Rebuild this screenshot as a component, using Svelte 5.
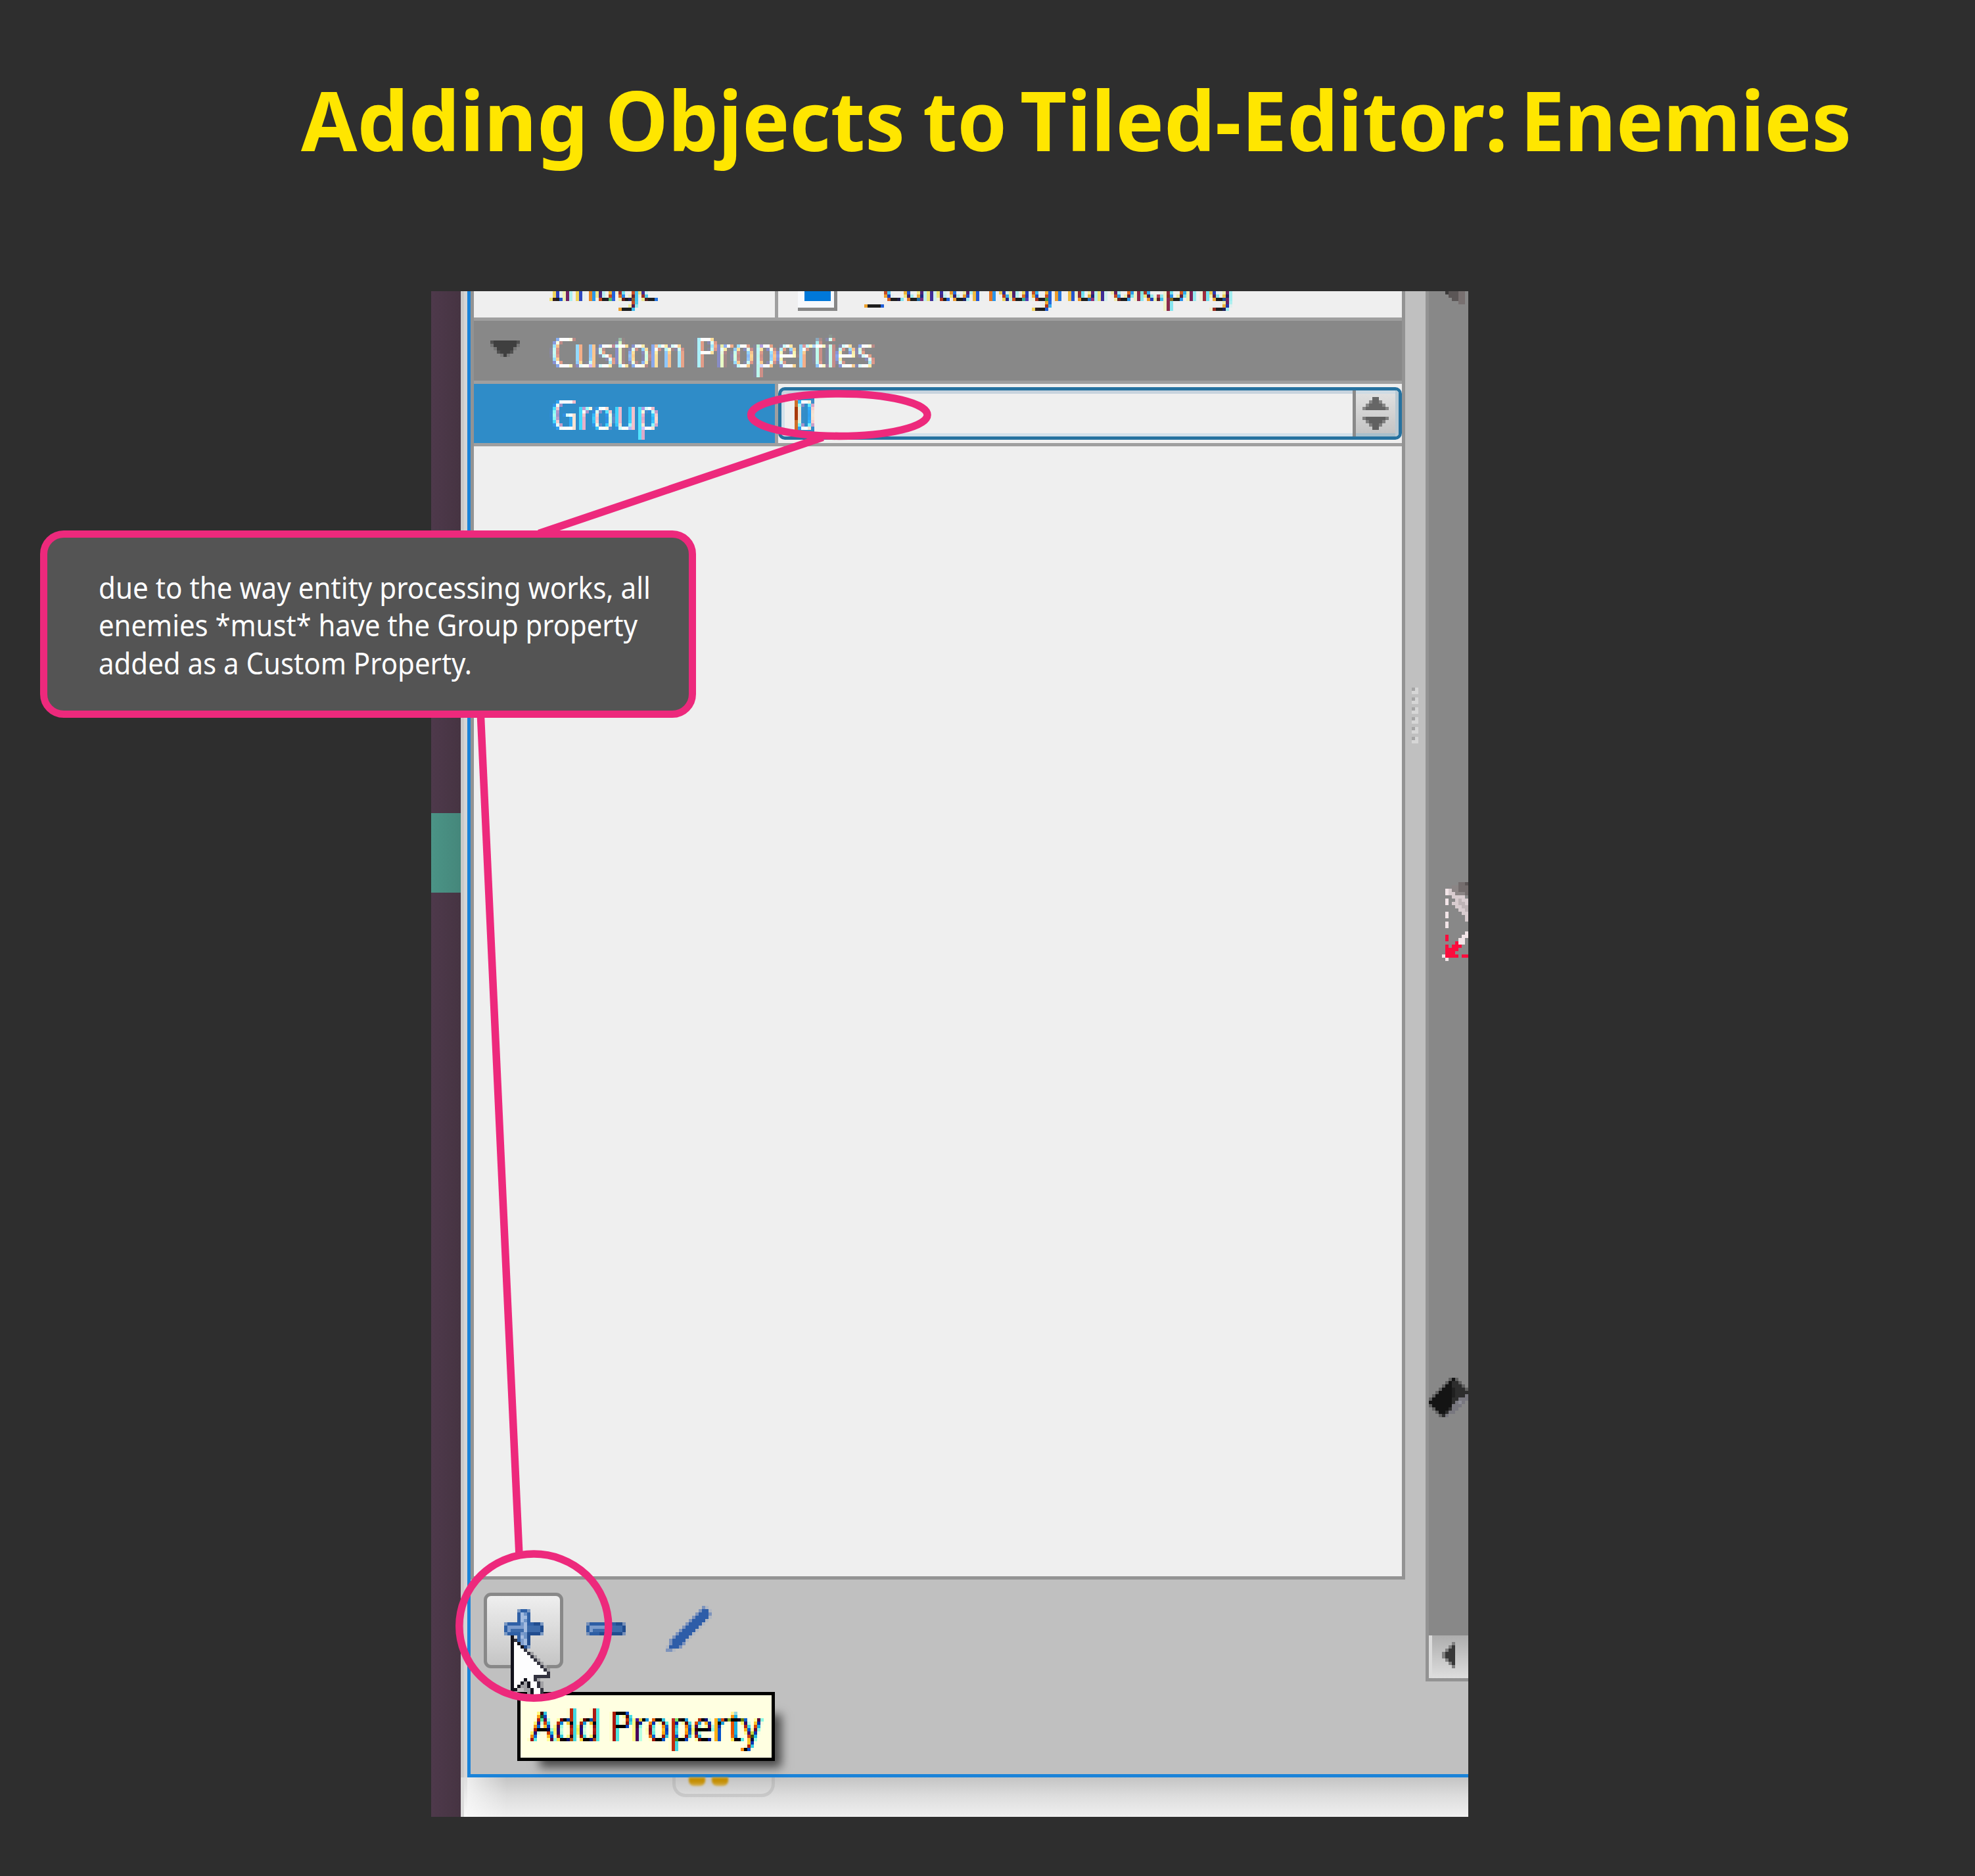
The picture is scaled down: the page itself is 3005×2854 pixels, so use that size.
<script>
  const plus = {
    rows: [
      '....lbbl....', '....bHMb....', '....bHHb....', '....bHMb....',
      'lbbbbMHbbddl', 'bhhhhhHmmmmd', 'bhmmmmHmmmmd', 'lbbbbhMddddl',
      '....bHMd....', '....bhHd....', '....bhHd....', '....lddl....'
    ],
    colors: { l: '#7a98c2', b: '#2f60a6', d: '#214d8f', h: '#7c9ccd', m: '#3d6bab', H: '#a3bbdf', M: '#6f94c8' }
  };
  const minus = {
    rows: ['lbbbbbbbbddl', 'bhhhhhmmmmmd', 'bhmmmmmmmmmd', 'lbbbdddddddl'],
    colors: { l: '#7790b8', b: '#2d5ea4', d: '#214d8f', h: '#7c9ccb', m: '#3d6bab' }
  };
  const pencil = {
    rows: [
      '...........lf.', '..........lbbf', '.........lbbbl', '........lbbbbf',
      '.......lbbbbf.', '......lbbbbf..', '.....lbbbbf...', '....lbbbbf....',
      '...lbbbbf.....', '..lbbbbf......', '.lbbbbf.......', '.lbbbl........',
      'fbbbl.........', 'llf...........'
    ],
    colors: { l: '#7d93bc', b: '#2e5da8', f: '#b1b7c2' }
  };
  const cursor = {
    rows: [
      'k...........', 'kD..........', 'kwk.........', 'kwwk........', 'kwwwD.......',
      'kwwwwDg.....', 'kwwwwwDg....', 'kwwwwwwDg...', 'kwwwwwwwDg..', 'kwwwwwwwwDg.',
      'kwwwwwwwwwDg', 'kwwwwwwwwwwD', 'kwwwwwwDDDDD', 'kwwwkwwDg...', 'kwwkgkwwDg..',
      'kwkggkwwDg..', 'kk..ggkwwD..', '.....gkwwD..'
    ],
    colors: { k: '#12121c', D: '#33333f', w: '#fdfdfe', g: '#a0a0a3' }
  };
  const expander = {
    rows: ['dkkkkkkkd', 'gkkkkkkkg', '.gkkkkkg.', '..dkkkd..', '...gkg...'],
    colors: { k: '#3f3f3f', d: '#505050', g: '#777' }
  };
  const up = { rows: ['...kk...', '..gkkg..', '.gkkkkg.', 'gkkkkkkg'], colors: { k: '#666', g: '#888' } };
  const down = { rows: ['gkkkkkkg', '.gkkkkg.', '..gkkg..', '...kk...'], colors: { k: '#606060', g: '#808080' } };
  const left = {
    rows: ['...g', '..gk', '.gkk', 'gkkk', 'gkkk', '.gkk', '..gk', '...g'],
    colors: { k: '#383838', g: '#808080' }
  };
  const corner = {
    rows: ['Kdddss', '.dddss', '..ddss', '....ss'],
    colors: { K: '#3c3a3a', d: '#5b5656', s: '#787070' }
  };
  const sprite = {
    rows: [
      '.........ddD', '.......mmddd', '.....wpmmddd', '.....wppmmmd', '.......pppp.',
      '.....w..pspp', '.....w.ppssp', '........ppss', '.........pps', '.....w....pp',
      '.....w.....p', '...........p', '.....w......', '.....w......', '............',
      '...........w', '.....r....ww', '.....r...ww.', '........rww.', '.....r.rrr..',
      '.....rrrr...', '.....rrr....', '....wrrrr.rr', '.....w......'
    ],
    colors: { D: '#5b5555', d: '#746d6d', m: '#8b8585', w: '#f2e5e8', p: '#d8cccf', s: '#beb4b6', r: '#fb0d3d' }
  };
  const eraser = {
    rows: [
      '......gkg...', '.....gkddg..', '....gkkdddg.', '...gkkkedddg', '..gkkkkedddd',
      '.gkkkkkedddv', 'gkkkkkkddvvv', 'kkkkkkkdvVv.', 'gkkkkkkvvv..', '.gkkkkdvv...',
      '..gkkdvv....', '...gdv......'
    ],
    colors: { k: '#141414', d: '#2d2d2d', e: '#202020', g: '#606060', v: '#78777f', V: '#8c8c96' }
  };

  const titleWords = [
    { text: 'Adding', x: 0, w: 437 },
    { text: 'Objects', x: 463, w: 456 },
    { text: 'to', x: 946, w: 128 },
    { text: 'Tiled-Editor:', x: 1094, w: 742 },
    { text: 'Enemies', x: 1855, w: 504 }
  ];
  const noteLines = [
    { text: 'due to the way entity processing works, all', y: 50, w: 840 },
    { text: 'enemies *must* have the Group property', y: 107, w: 820 },
    { text: 'added as a Custom Property.', y: 165, w: 568 }
  ];
</script>

{#snippet art(a)}
  <svg class="art" width={a.rows[0].length * 5} height={a.rows.length * 5}
    viewBox="0 0 {a.rows[0].length} {a.rows.length}" shape-rendering="crispEdges">
    {#each a.rows as row, y}
      {#each row.split('') as c, x}
        {#if a.colors[c]}<rect {x} {y} width="1" height="1" fill={a.colors[c]} />{/if}
      {/each}
    {/each}
  </svg>
{/snippet}

{#snippet label(text, width, height, base, length, x = 7)}
  <svg class="label" {width} {height}>
    <text {x} y={base} textLength={length} lengthAdjust="spacingAndGlyphs">{text}</text>
  </svg>
{/snippet}

<main>
  <!-- Enlarged subpixel text: shift the colour channels, then repeat one sample per 5px cell -->
  <svg class="defs" width="0" height="0">
    <filter id="cells" x="0" y="0" width="100%" height="100%" color-interpolation-filters="sRGB">
      <feGaussianBlur in="SourceGraphic" stdDeviation="1.1 0.7" result="soft" />
      <feOffset in="soft" dx="2" dy="0" result="or" />
      <feColorMatrix in="or" type="matrix" values="1 0 0 0 0  0 0 0 0 0  0 0 0 0 0  0 0 0 1 0" result="r" />
      <feColorMatrix in="soft" type="matrix" values="0 0 0 0 0  0 1 0 0 0  0 0 0 0 0  0 0 0 1 0" result="g" />
      <feOffset in="soft" dx="-2" dy="0" result="ob" />
      <feColorMatrix in="ob" type="matrix" values="0 0 0 0 0  0 0 0 0 0  0 0 1 0 0  0 0 0 1 0" result="b" />
      <feComposite in="r" in2="g" operator="arithmetic" k1="0" k2="1" k3="1" k4="0" result="rg" />
      <feComposite in="rg" in2="b" operator="arithmetic" k1="0" k2="1" k3="1" k4="0" result="rgb" />
      <feFlood x="2" y="2" width="1" height="1" flood-color="#000" />
      <feComposite x="0" y="0" width="5" height="5" />
      <feTile result="dots" />
      <feComposite in="rgb" in2="dots" operator="in" />
      <feMorphology operator="dilate" radius="2" />
    </filter>
  </svg>

  <h1>
    <svg width="2400" height="180">
      {#each titleWords as t}
        <text x={t.x} y="130" textLength={t.w} lengthAdjust="spacingAndGlyphs">{t.text}</text>
      {/each}
    </svg>
  </h1>

  <section class="shot">
    <div class="backdrop"><div class="teal"></div></div>
    <div class="gutter"></div>
    <div class="desk">
      <div class="window">
        <div class="dock">
          <div class="props">
            <div class="row image">
              <div class="key"><div class="pix light">{@render label('Image', 195, 40, 15, 165)}</div></div>
              <div class="value">
                <div class="file"><div class="blue"></div></div>
                <div class="pix light name">{@render label('_editorRagnarok.png', 600, 40, 15, 557, 8)}</div>
              </div>
            </div>
            <div class="row head">
              <div class="twisty">{@render art(expander)}</div>
              <div class="pix grey">{@render label('Custom Properties', 525, 90, 70, 492)}</div>
            </div>
            <div class="row group">
              <div class="key sel"><div class="pix bluebg">{@render label('Group', 195, 90, 70, 164)}</div></div>
              <div class="value">
                <div class="spin">
                  <div class="caret"></div>
                  <div class="pix bluebg digit">{@render label('0', 35, 55, 50, 30, 1)}</div>
                  <div class="steps">{@render art(up)}{@render art(down)}</div>
                </div>
              </div>
            </div>
          </div>
          <div class="tools">
            <div class="btn">{@render art(plus)}</div>
            <div class="minus">{@render art(minus)}</div>
            <div class="pencil">{@render art(pencil)}</div>
          </div>
        </div>
        <div class="splitter">
          {#each Array(6) as _}<i></i>{/each}
        </div>
        <div class="scene">
          <div class="s-corner">{@render art(corner)}</div>
          <div class="s-sprite">{@render art(sprite)}</div>
          <div class="s-eraser">{@render art(eraser)}</div>
          <div class="scroll">{@render art(left)}</div>
        </div>
      </div>
      <div class="below">
        <div class="card"><i></i><i></i></div>
      </div>
    </div>

    <div class="tip"><div class="pix cream">{@render label('Add Property', 382, 90, 65, 351, 15)}</div></div>
    <div class="pointer">{@render art(cursor)}</div>
  </section>

  <svg class="marks" width="3005" height="2854" fill="none" stroke="#ed297c" stroke-width="11.5">
    <line x1="820" y1="811.5" x2="1252" y2="665.3" />
    <line x1="731" y1="1080" x2="789.8" y2="2362" />
    <ellipse cx="1276.8" cy="631.2" rx="134.2" ry="32.2" />
    <ellipse cx="812.3" cy="2473.7" rx="113.5" ry="109.6" />
  </svg>

  <aside class="note">
    <svg width="900" height="190">
      {#each noteLines as l}
        <text x="0" y={l.y} textLength={l.w} lengthAdjust="spacingAndGlyphs">{l.text}</text>
      {/each}
    </svg>
  </aside>
</main>

<style>
  :global(body) { background: #2e2e2e; }
  main {
    position: relative; width: 3005px; height: 2854px; overflow: hidden;
    background: #2e2e2e; font-family: "Noto Sans", "Open Sans", sans-serif;
  }
  main :is(div, aside, h1, i) { box-sizing: border-box; }
  svg { display: block; }
  .defs { position: absolute; }
  h1 { margin: 0; padding: 100px 0 0 458px; height: 443px; font-size: 126px; font-weight: 700; line-height: 1; }
  h1 svg { overflow: visible; }
  h1 text { fill: #ffe600; }

  .shot {
    position: relative; margin-left: 656px; width: 1578px; height: 2321px;
    display: grid; grid-template-columns: 45px 10px 1fr; overflow: hidden;
  }
  .backdrop { background: linear-gradient(90deg, #4e394b, #463442); padding-top: 794px; }
  .teal { height: 121px; background: linear-gradient(90deg, #4b9486, #45877b); }
  .gutter { background: linear-gradient(90deg, #c9c9c9 50%, #d5d5d5 50%); padding-top: 2261px; }
  .gutter::after {
    content: ""; display: block; height: 60px;
    background: linear-gradient(90deg, #dcdcdc 50%, transparent 50%), linear-gradient(#dedede, #fafafa);
  }
  .desk { display: flex; flex-direction: column; min-width: 0; }
  .window {
    height: 2261px; border-left: 5px solid #1a83d9; border-bottom: 5px solid #1a83d9;
    background: #c0c0c0; display: flex; align-items: flex-start;
  }
  .dock { width: 1422px; height: 100%; display: flex; flex-direction: column; }
  .props {
    height: 1960px; border: 5px solid #939393; border-top: 0; background: #efefef;
    display: flex; flex-direction: column;
  }
  .row { display: flex; border-bottom: 5px solid #9f9f9f; overflow: hidden; }
  .key { width: 463px; border-right: 5px solid #9f9f9f; padding-left: 110px; }
  .value { flex: 1; display: flex; }
  .image { height: 45px; }
  .head { height: 96px; background: #888; }
  .head .pix { margin-top: 1px; }
  .group { height: 95px; }
  .sel { background: #2f8cc8; }
  .twisty { width: 110px; padding: 30px 0 0 25px; }
  .pix { filter: url(#cells); clip-path: inset(0 5px); flex: none; width: max-content; }
  .light { background: #efefef; color: #1e1e1e; }
  .grey { background: #888; color: #fff; }
  .bluebg { background: #2f8cc8; color: #fff; }
  .cream { background: #ffffe1; color: #000; }
  .label { overflow: visible; }
  .label text { fill: currentColor; font-size: 63px; }
  .file {
    width: 60px; height: 30px; margin-left: 30px; padding-left: 10px;
    border-right: 5px solid #878787; border-bottom: 5px solid #878787; background: #f7f9fc;
  }
  .blue { width: 40px; height: 15px; background: #0078d9; }
  .name { margin-left: 36px; }
  .spin {
    flex: 1; height: 80px; margin-top: 5px; border: 5px solid #2672a0; border-radius: 10px;
    background: #efefef; display: flex; overflow: hidden;
    box-shadow: inset 0 5px #c7d3de, inset 0 -5px #d3e1eb, inset 5px 0 #d3e1eb;
  }
  .caret { width: 5px; height: 50px; margin: 15px 0 0 20px; background: linear-gradient(#cf6f29 10px, #a8380a 10px, #a8380a 30px, #cf6f29 30px); }
  .digit { margin: 10px 0 0 -5px; height: 55px; }
  .steps {
    margin-left: auto; width: 70px; border-left: 5px solid #8a8a8a; padding: 10px 0 0 10px;
    background: linear-gradient(#e2e2e2, #c2c2c2); display: flex; flex-direction: column; gap: 10px;
    box-shadow: inset -5px 0 #b9c9d3, inset 0 5px #cfdbe4, inset 0 -5px #a9bfcb;
  }
  .tools { flex: 1; display: flex; align-items: flex-start; padding: 20px 0 0 20px; }
  .btn {
    width: 121px; height: 115px; border: 5px solid #888; border-radius: 11px;
    background: linear-gradient(#efefef, #c5c5c5); padding: 20px 0 0 26px;
  }
  .minus { margin: 45px 0 0 35px; }
  .pencil { margin: 20px 0 0 61px; }
  .splitter { width: 31px; padding: 603px 0 0 10px; display: flex; flex-direction: column; gap: 5px; }
  .splitter i { width: 10px; height: 10px; background: linear-gradient(#a4a4a4, #a4a4a4) 0 0 / 5px 5px no-repeat #d6d6d6; }
  .scene {
    flex: 1; height: 2115px; border-left: 5px solid #939393; border-bottom: 5px solid #939393;
    background: #888; display: flex; flex-direction: column;
  }
  .s-corner { height: 899px; padding-left: 25px; }
  .s-sprite { height: 754px; }
  .s-eraser { height: 392px; }
  .scroll { flex: 1; background: linear-gradient(#adadad, #dedede); border-left: 5px solid #dcdcdc; padding: 10px 0 0 15px; }
  .below {
    flex: 1; padding-left: 312px;
    background: linear-gradient(90deg, rgba(250,250,250,.75), rgba(250,250,250,0) 60px), linear-gradient(#c4c4c4, #dcdcdc 45%, #f0f0f0);
  }
  .card {
    width: 156px; height: 30px; border: 5px solid rgba(160,160,160,.32); border-top: 0;
    border-radius: 0 0 20px 20px; display: flex; gap: 10px; padding-left: 20px;
  }
  .card i { width: 25px; height: 13px; border-radius: 0 0 8px 8px; background: linear-gradient(#c48f05 50%, #d4b052); filter: blur(1.5px); }

  .tip {
    position: absolute; left: 131px; top: 2131px; width: 392px; height: 105px; border: 5px solid #000;
    background: #ffffe1; padding-top: 5px; box-shadow: 22px 22px 14px -12px rgba(0,0,0,.62);
  }
  .pointer { position: absolute; left: 121px; top: 2045px; }
  .marks { position: absolute; left: 0; top: 0; }
  .note {
    position: absolute; left: 60.5px; top: 807px; width: 998px; height: 285px; background: #545454;
    border: 11.5px solid #ed297c; border-radius: 36px; padding: 42.5px 0 0 78px;
  }
  .note svg { overflow: visible; }
  .note text { fill: #fff; font-size: 45px; }
</style>
